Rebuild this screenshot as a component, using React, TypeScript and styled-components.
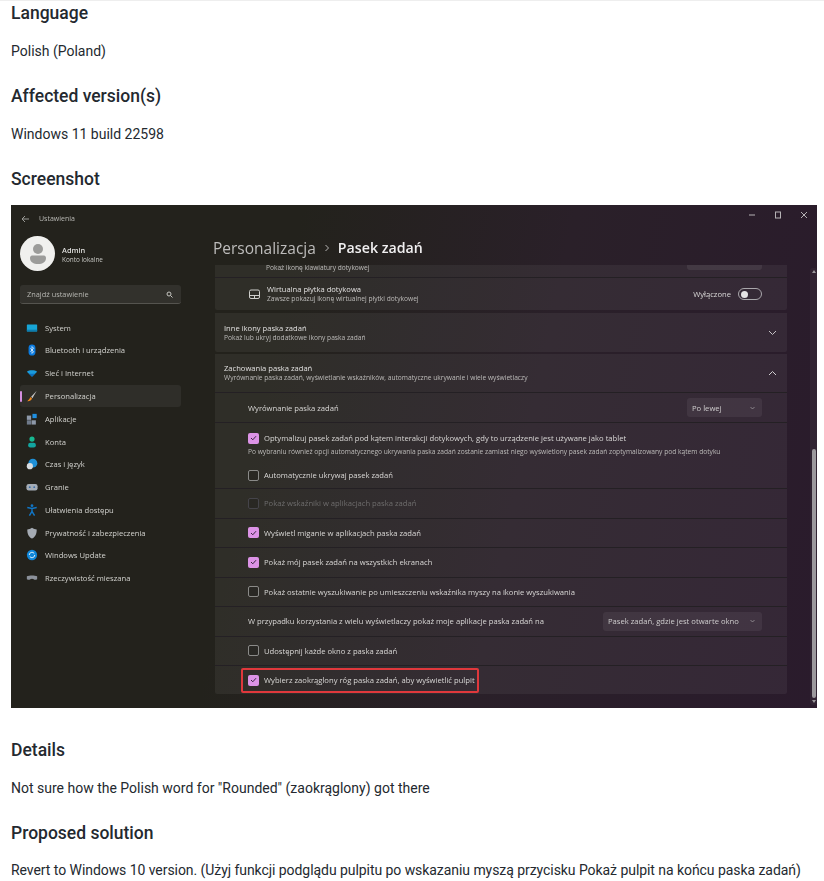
import type { ReactNode } from "react";
import styled, { createGlobalStyle } from "styled-components";

const Global = createGlobalStyle`
  html, body { margin: 0; padding: 0; background: #fff; }
  body {
    font-family: Roboto, "Liberation Sans", sans-serif;
    font-size: 14px;
    line-height: 1.5;
    color: #24292f;
  }
`;

const navIcons: { label: string; active?: boolean; icon: ReactNode }[] = [
  {
    label: "System",
    icon: (
      <>
        <rect x="1" y="3" width="12" height="8" rx="0.6" fill="#17a5d6" />
        <rect x="1" y="9" width="12" height="2" fill="#0c7cae" />
      </>
    ),
  },
  {
    label: "Bluetooth i urządzenia",
    icon: (
      <>
        <rect x="3" y="0.5" width="8" height="13" rx="4" fill="#0a7be0" />
        <path d="M5 5l4 4-2 2V3l2 2-4 4" fill="none" stroke="#fff" strokeWidth="0.8" />
      </>
    ),
  },
  {
    label: "Sieć i Internet",
    icon: (
      <>
        <path d="M1 5.5C4 3.2 10 3.2 13 5.5L7 11.5z" fill="#1a9bdc" />
        <path d="M3.5 8h7L7 11.5z" fill="#0b6fc0" />
      </>
    ),
  },
  {
    label: "Personalizacja",
    active: true,
    icon: (
      <>
        <path d="M12.5 1L6 8l1.5 1.5z" fill="#c8c8c8" />
        <path d="M5.5 8.3L7 10c-.8 2.4-3 3.2-5.5 3 1.5-1 2.5-2.5 4-4.7z" fill="#f28a1e" />
      </>
    ),
  },
  {
    label: "Aplikacje",
    icon: (
      <>
        <rect x="1" y="3" width="5" height="5" fill="#8d98a8" />
        <rect x="1" y="8.5" width="5" height="5" fill="#6f7a8a" />
        <rect x="6.5" y="8.5" width="5" height="5" fill="#8d98a8" />
        <rect x="7.5" y="1" width="5" height="5" fill="#1f8fe0" />
      </>
    ),
  },
  {
    label: "Konta",
    icon: (
      <>
        <circle cx="7" cy="3.6" r="3" fill="#17b890" />
        <rect x="2.5" y="8" width="9" height="5.5" rx="2.5" fill="#12a5a0" />
      </>
    ),
  },
  {
    label: "Czas i język",
    icon: (
      <>
        <circle cx="8" cy="6" r="5.2" fill="#1e90d8" />
        <circle cx="4.5" cy="9.5" r="3.6" fill="#d8dde2" />
      </>
    ),
  },
  {
    label: "Granie",
    icon: (
      <>
        <rect x="0.5" y="3.5" width="13" height="7.5" rx="2.6" fill="#a4acb6" />
        <circle cx="4.4" cy="7.2" r="1.1" fill="#3a6ea8" />
        <circle cx="9.6" cy="7.2" r="1.1" fill="#3a6ea8" />
      </>
    ),
  },
  {
    label: "Ułatwienia dostępu",
    icon: (
      <>
        <circle cx="7" cy="2" r="1.6" fill="#1176c6" />
        <path d="M1.5 4l5.5 1.2L12.5 4M7 5.2v3.5M7 8.5l-3 5M7 8.5l3 5" fill="none" stroke="#1176c6" strokeWidth="1.7" />
      </>
    ),
  },
  {
    label: "Prywatność i zabezpieczenia",
    icon: <path d="M7 1c2 1.4 3.6 1.8 5.5 1.8 0 5-1.4 8.5-5.5 10.7C2.9 11.3 1.5 7.8 1.5 2.8 3.4 2.8 5 2.4 7 1z" fill="#a5abb3" />,
  },
  {
    label: "Windows Update",
    icon: (
      <>
        <circle cx="7" cy="7" r="6" fill="#0f86d8" />
        <path d="M3.8 7a3.2 3.2 0 0 1 5.8-1.8M10.2 7a3.2 3.2 0 0 1-5.8 1.8" fill="none" stroke="#fff" strokeWidth="1" />
      </>
    ),
  },
  {
    label: "Rzeczywistość mieszana",
    icon: <path d="M1 5c3-1.2 9-1.2 12 0v3.5c-2 .8-3 .8-4 0-1-.8-3-.8-4 0-1 .8-2 .8-4 0z" fill="#8b919a" />,
  },
];

const Page = styled.div`
  border-top: 1px solid #eeeeee;
  padding: 2px 7px 0 11px;
  height: 878px;
  overflow: hidden;
`;

const Heading = styled.h3`
  margin: 24px 0 16px;
  font-size: 17.5px;
  line-height: 1.25;
  font-weight: 500;
  color: #24292f;

  &:first-child {
    margin-top: 0;
  }
`;

const Para = styled.p<{ $tight?: boolean }>`
  margin: 0 0 16px;
  white-space: nowrap;
  letter-spacing: ${(p) => (p.$tight ? "-0.06px" : "normal")};
`;

const Shot = styled.div`
  width: 806px;
  height: 503px;
  margin: -1.5px 0 31.5px;
  display: flex;
  flex-direction: column;
  overflow: hidden;
  background: linear-gradient(102deg, #23221c 0%, #23221c 32%, #2a2029 62%, #2a1b2c 100%);
  color: #e6e6e4;
  font-family: "Open Sans", "Liberation Sans", sans-serif;
  font-size: 7.65px;
  line-height: 10px;
`;

const Blur = styled.div`
  display: flex;
  flex-direction: column;
  flex: 1;
  min-height: 0;
  filter: blur(0.5px);
`;

const TitleBar = styled.div`
  height: 28px;
  flex: none;
  display: flex;
  align-items: center;
  padding: 0 9px 0 10px;
  color: #b9b9b5;
  font-size: 7px;
`;

const BackArrow = styled.svg`
  width: 9px;
  height: 8px;
  margin: -1px 9px 0 0;
`;

const WinControls = styled.div`
  margin: -8px 0 0 auto;
  display: flex;
  gap: 18px;
`;

const WinGlyph = styled.svg`
  width: 8px;
  height: 8px;
`;

const Columns = styled.div`
  flex: 1;
  min-height: 0;
  display: flex;
`;

const Sidebar = styled.aside`
  width: 202px;
  flex: none;
  padding-left: 9px;
  box-sizing: border-box;
`;

const Profile = styled.div`
  display: flex;
  align-items: center;
  gap: 7px;
  padding-top: 1px;
  height: 39px;
  box-sizing: content-box;
`;

const Avatar = styled.div`
  width: 35px;
  height: 35px;
  border-radius: 50%;
  background: #f0f0ee;
  flex: none;
  display: flex;
  align-items: center;
  justify-content: center;
`;

const ProfileText = styled.div`
  display: flex;
  flex-direction: column;
  margin-top: 2px;
  line-height: 10px;
`;

const ProfileName = styled.span`
  font-size: 7.4px;
  font-weight: 600;
  color: #dededc;
`;

const ProfileSub = styled.span`
  font-size: 6.4px;
  color: #c6c6c2;
`;

const SearchBox = styled.div`
  margin-top: 12px;
  width: 161px;
  height: 19px;
  box-sizing: border-box;
  background: #32312c;
  border-bottom: 1px solid #55544f;
  border-radius: 3px;
  padding: 0 8px 0 7px;
  display: flex;
  align-items: center;
  justify-content: space-between;
  color: #b5b5b0;
  font-size: 7.4px;
`;

const Nav = styled.nav`
  margin-top: 12px;
`;

const NavRow = styled.div<{ $active?: boolean }>`
  position: relative;
  width: 161px;
  height: 22.8px;
  display: flex;
  align-items: center;
  gap: 7px;
  padding-left: 6px;
  box-sizing: border-box;
  border-radius: 3px;
  color: #d2d2ce;
  background: ${(p) => (p.$active ? "#2f2e29" : "transparent")};
`;

const NavMark = styled.span`
  position: absolute;
  left: 0;
  top: 6px;
  width: 2px;
  height: 11px;
  border-radius: 1px;
  background: #d58fe0;
`;

const NavIcon = styled.svg`
  width: 12px;
  height: 12px;
  flex: none;
`;

const Main = styled.main`
  flex: 1;
  min-width: 0;
  display: flex;
  flex-direction: column;
`;

const PageTitle = styled.div`
  height: 32px;
  flex: none;
  display: flex;
  align-items: center;
  gap: 8px;
  padding-bottom: 2px;
  box-sizing: border-box;
  font-size: 15.5px;
  line-height: 30px;
  color: #bdbcbb;
`;

const TitleSep = styled.svg`
  width: 6px;
  height: 8px;
`;

const TitleNow = styled.span`
  font-size: 14.2px;
  font-weight: 600;
  color: #f0eff0;
`;

const Scroller = styled.div`
  flex: 1;
  min-height: 0;
  display: flex;
`;

const List = styled.div`
  width: 572px;
  margin-left: 2px;
  flex: none;
  display: flex;
  flex-direction: column;
  gap: 2px;
`;

const Card = styled.section<{ $gap?: number }>`
  background: rgba(255, 255, 255, 0.055);
  border-radius: 0 0 2px 2px;
  display: flex;
  flex-direction: column;
  margin-bottom: ${(p) => p.$gap ?? 0}px;
`;

const Row = styled.div<{ $h: number }>`
  height: ${(p) => p.$h}px;
  flex: none;
  display: flex;
  align-items: center;
  box-sizing: border-box;
  padding: 0 25px 0 33px;
  border-top: 1px solid #242024;
  &:first-child {
    border-top: 0;
  }
`;

const StubRow = styled(Row)`
  align-items: flex-start;
  padding-left: 51px;
  font-size: 6.6px;
  line-height: 6px;
  color: #bdbcba;
`;

const StubSelect = styled.span`
  margin-left: auto;
  width: 75px;
  height: 5px;
  border-radius: 0 0 3px 3px;
  background: rgba(255, 255, 255, 0.07);
`;

const Head = styled.div<{ $h: number }>`
  height: ${(p) => p.$h}px;
  flex: none;
  display: flex;
  align-items: center;
  padding: 0 10px 0 9px;
`;

const TextStack = styled.div`
  display: flex;
  flex-direction: column;
  white-space: nowrap;
`;

const RowTitle = styled.span`
  font-size: 7.6px;
  color: #e2e1e0;
`;

const RowSub = styled.span`
  font-size: 6.65px;
  color: #bcbbb9;
`;

const Chevron = styled.svg`
  margin-left: auto;
  width: 9px;
  height: 6px;
`;

const DeviceIcon = styled.svg`
  width: 13px;
  height: 12px;
  margin: 0 6px 0 0;
  flex: none;
`;

const ToggleLabel = styled.span`
  margin-left: auto;
  margin-right: 7px;
  color: #d8d7d6;
`;

const Toggle = styled.span`
  width: 24px;
  height: 12px;
  box-sizing: border-box;
  border: 1px solid #a9a7ab;
  border-radius: 6px;
  display: flex;
  align-items: center;
  padding-left: 2px;

  &::before {
    content: "";
    width: 7px;
    height: 7px;
    border-radius: 50%;
    background: #e4e3e4;
  }
`;

const Select = styled.span<{ $w: number }>`
  margin-left: auto;
  width: ${(p) => p.$w}px;
  height: 19px;
  box-sizing: border-box;
  padding: 0 7px 0 3px;
  background: rgba(255, 255, 255, 0.06);
  border-radius: 3px;
  display: flex;
  align-items: center;
  justify-content: space-between;
  color: #cfcdce;
  white-space: nowrap;
`;

const SmallChevron = styled.svg`
  width: 5px;
  height: 4px;
  flex: none;
`;

const Check = styled.span<{ $state: "on" | "off" | "disabled" }>`
  width: 11px;
  height: 11px;
  box-sizing: border-box;
  flex: none;
  border-radius: 2px;
  margin-right: 5px;
  display: flex;
  align-items: center;
  justify-content: center;
  background: ${(p) => (p.$state === "on" ? "#dc93e6" : "rgba(0,0,0,.12)")};
  border: ${(p) =>
    p.$state === "on"
      ? "0"
      : p.$state === "off"
        ? "1px solid #8a8a88"
        : "1px solid #45444a"};
`;

const Label = styled.span<{ $dim?: boolean }>`
  white-space: nowrap;
  color: ${(p) => (p.$dim ? "#6e6d6d" : "#d9d8d6")};
`;

const OptGroup = styled.div`
  height: 66px;
  flex: none;
  box-sizing: border-box;
  padding: 9px 25px 0 33px;
  border-top: 1px solid #242024;
  display: flex;
  flex-direction: column;
`;

const OptLine = styled.div`
  display: flex;
  align-items: center;
  height: 12px;
`;

const OptNote = styled.div`
  margin: 3px 0 12px;
  height: 10px;
  font-size: 6.65px;
  color: #bcbbb9;
  white-space: nowrap;
`;

const Marked = styled.div`
  margin: 0 0 0 -7px;
  height: 25px;
  width: 238px;
  box-sizing: border-box;
  border: 2px solid #e0383c;
  border-radius: 2px;
  padding-left: 5px;
  display: flex;
  align-items: center;
`;

const ScrollTrack = styled.div`
  margin: 3px 0 3px 23px;
  width: 7px;
  flex: none;
  display: flex;
  flex-direction: column;
  align-items: center;
  background: rgba(255, 255, 255, 0.035);
  border-radius: 3px;
`;

const ScrollArrow = styled.span<{ $down?: boolean }>`
  width: 0;
  height: 0;
  flex: none;
  border-left: 2px solid transparent;
  border-right: 2px solid transparent;
  border-bottom: ${(p) => (p.$down ? "0" : "3px solid #9c999d")};
  border-top: ${(p) => (p.$down ? "3px solid #9c999d" : "0")};
  margin: 2px 0;
`;

const ScrollThumb = styled.div`
  width: 4px;
  height: 249px;
  margin-top: auto;
  border-radius: 2px;
  background: #9c999d;
`;

const Tick = ({ color = "#3a2540" }: { color?: string }) => (
  <svg width="7" height="6" viewBox="0 0 7 6">
    <path d="M1 3l1.8 1.8L6 1.2" fill="none" stroke={color} strokeWidth="1" />
  </svg>
);

const Down = () => (
  <SmallChevron viewBox="0 0 5 4">
    <path d="M.5 1l2 2 2-2" fill="none" stroke="#a9a7aa" strokeWidth=".7" />
  </SmallChevron>
);

const CheckRow = ({ state, text, dim }: { state: "on" | "off" | "disabled"; text: string; dim?: boolean }) => (
  <Row $h={29.5}>
    <Check $state={state}>{state === "on" && <Tick />}</Check>
    <Label $dim={dim}>{text}</Label>
  </Row>
);

export default function App() {
  return (
    <Page>
      <Global />
      <Heading>Language</Heading>
      <Para>Polish (Poland)</Para>
      <Heading>Affected version(s)</Heading>
      <Para>Windows 11 build 22598</Para>
      <Heading>Screenshot</Heading>
      <Shot>
        <Blur>
          <TitleBar>
            <BackArrow viewBox="0 0 9 8">
              <path d="M8 4H1M4 1L1 4l3 3" fill="none" stroke="#9a9a96" strokeWidth="1" />
            </BackArrow>
            Ustawienia
            <WinControls>
              <WinGlyph viewBox="0 0 8 8">
                <path d="M1 4h6" stroke="#b5b2b5" strokeWidth="1" />
              </WinGlyph>
              <WinGlyph viewBox="0 0 8 8">
                <rect x="1.5" y="1" width="5" height="6" fill="none" stroke="#b5b2b5" strokeWidth="1" />
              </WinGlyph>
              <WinGlyph viewBox="0 0 8 8">
                <path d="M1 1l6 6M7 1L1 7" stroke="#b5b2b5" strokeWidth="1" />
              </WinGlyph>
            </WinControls>
          </TitleBar>
          <Columns>
            <Sidebar>
              <Profile>
                <Avatar>
                  <svg width="18" height="22" viewBox="0 0 18 22">
                    <circle cx="9" cy="6" r="5" fill="#9c9c9a" />
                    <path d="M1 15c0-2 1.5-2.5 3-2.5h10c1.5 0 3 .5 3 2.5 0 4-3.500 6-8 6s-8-2-8-6z" fill="#9c9c9a" />
                  </svg>
                </Avatar>
                <ProfileText>
                  <ProfileName>Admin</ProfileName>
                  <ProfileSub>Konto lokalne</ProfileSub>
                </ProfileText>
              </Profile>
              <SearchBox>
                Znajdź ustawienie
                <svg width="7" height="7" viewBox="0 0 7 7">
                  <circle cx="3" cy="3" r="2" fill="none" stroke="#c5c5c0" strokeWidth="1" />
                  <path d="M4.5 4.5L6.5 6.5" stroke="#c5c5c0" strokeWidth="1" />
                </svg>
              </SearchBox>
              <Nav>
                {navIcons.map((item) => (
                  <NavRow key={item.label} $active={item.active}>
                    {item.active && <NavMark />}
                    <NavIcon viewBox="0 0 14 14">{item.icon}</NavIcon>
                    {item.label}
                  </NavRow>
                ))}
              </Nav>
            </Sidebar>
            <Main>
              <PageTitle>
                Personalizacja
                <TitleSep viewBox="0 0 6 8">
                  <path d="M1.5 1l3 3-3 3" fill="none" stroke="#b8b7b6" strokeWidth="1" />
                </TitleSep>
                <TitleNow>Pasek zadań</TitleNow>
              </PageTitle>
              <Scroller>
                <List>
                  <Card $gap={1}>
                    <StubRow $h={12}>
                      Pokaż ikonę klawiatury dotykowej
                      <StubSelect />
                    </StubRow>
                    <Row $h={33}>
                      <DeviceIcon viewBox="0 0 13 12">
                        <rect x="1.5" y="2" width="10" height="8.5" rx="1.5" fill="none" stroke="#cfcfcc" strokeWidth="1" />
                        <path d="M1.5 7.5h10M6.5 7.5v3" stroke="#cfcfcc" strokeWidth="1" />
                      </DeviceIcon>
                      <TextStack>
                        <RowTitle>Wirtualna płytka dotykowa</RowTitle>
                        <RowSub>Zawsze pokazuj ikonę wirtualnej płytki dotykowej</RowSub>
                      </TextStack>
                      <ToggleLabel>Wyłączone</ToggleLabel>
                      <Toggle />
                    </Row>
                  </Card>
                  <Card>
                    <Head $h={39}>
                      <TextStack>
                        <RowTitle>Inne ikony paska zadań</RowTitle>
                        <RowSub>Pokaż lub ukryj dodatkowe ikony paska zadań</RowSub>
                      </TextStack>
                      <Chevron viewBox="0 0 9 6">
                        <path d="M1 1l3.5 3.5L8 1" fill="none" stroke="#c5c3c5" strokeWidth="1" />
                      </Chevron>
                    </Head>
                  </Card>
                  <Card>
                    <Head $h={38}>
                      <TextStack>
                        <RowTitle>Zachowania paska zadań</RowTitle>
                        <RowSub>Wyrównanie paska zadań, wyświetlanie wskaźników, automatyczne ukrywanie i wiele wyświetlaczy</RowSub>
                      </TextStack>
                      <Chevron viewBox="0 0 9 6">
                        <path d="M1 5l3.5-3.5L8 5" fill="none" stroke="#d0ced0" strokeWidth="1" />
                      </Chevron>
                    </Head>
                    <Row $h={30}>
                      <Label>Wyrównanie paska zadań</Label>
                      <Select $w={75}>
                        &nbsp;Po lewej
                        <Down />
                      </Select>
                    </Row>
                    <OptGroup>
                      <OptLine>
                        <Check $state="on">
                          <Tick />
                        </Check>
                        <Label>Optymalizuj pasek zadań pod kątem interakcji dotykowych, gdy to urządzenie jest używane jako tablet</Label>
                      </OptLine>
                      <OptNote>
                        Po wybraniu również opcji automatycznego ukrywania paska zadań zostanie zamiast niego wyświetlony pasek zadań zoptymalizowany pod kątem dotyku
                      </OptNote>
                      <OptLine>
                        <Check $state="off" />
                        <Label>Automatycznie ukrywaj pasek zadań</Label>
                      </OptLine>
                    </OptGroup>
                    <CheckRow state="disabled" dim text="Pokaż wskaźniki w aplikacjach paska zadań" />
                    <CheckRow state="on" text="Wyświetl miganie w aplikacjach paska zadań" />
                    <CheckRow state="on" text="Pokaż mój pasek zadań na wszystkich ekranach" />
                    <CheckRow state="off" text="Pokaż ostatnie wyszukiwanie po umieszczeniu wskaźnika myszy na ikonie wyszukiwania" />
                    <Row $h={29.5}>
                      <Label>W przypadku korzystania z wielu wyświetlaczy pokaż moje aplikacje paska zadań na</Label>
                      <Select $w={159}>
                        &nbsp;Pasek zadań, gdzie jest otwarte okno
                        <Down />
                      </Select>
                    </Row>
                    <CheckRow state="off" text="Udostępnij każde okno z paska zadań" />
                    <Row $h={29}>
                      <Marked>
                        <Check $state="on">
                          <Tick />
                        </Check>
                        <Label>Wybierz zaokrąglony róg paska zadań, aby wyświetlić pulpit</Label>
                      </Marked>
                    </Row>
                  </Card>
                </List>
                <ScrollTrack>
                  <ScrollArrow />
                  <ScrollThumb />
                  <ScrollArrow $down />
                </ScrollTrack>
              </Scroller>
            </Main>
          </Columns>
        </Blur>
      </Shot>
      <Heading>Details</Heading>
      <Para>Not sure how the Polish word for "Rounded" (zaokrąglony) got there</Para>
      <Heading>Proposed solution</Heading>
      <Para $tight>Revert to Windows 10 version. (Użyj funkcji podglądu pulpitu po wskazaniu myszą przycisku Pokaż pulpit na końcu paska zadań)</Para>
    </Page>
  );
}
